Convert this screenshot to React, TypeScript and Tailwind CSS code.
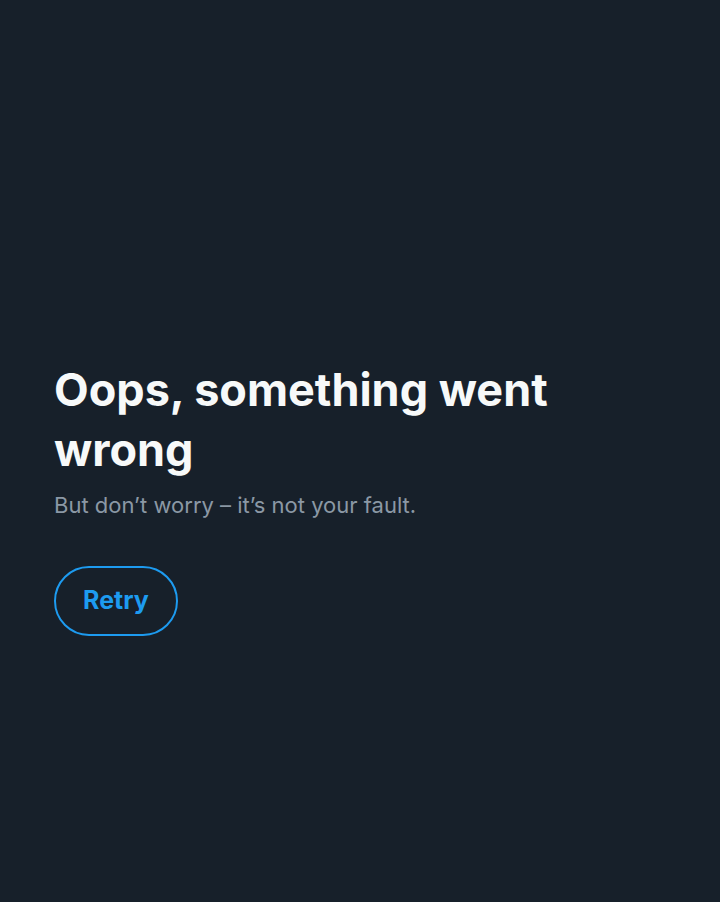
import React from 'react';

const App: React.FC = () => {
  return (
    <div
      className="min-h-screen w-full bg-[#17202a] px-[54px] pt-[360px]"
      style={{ fontFamily: 'Inter, "Liberation Sans", sans-serif' }}
    >
      <h1 className="text-[45px] leading-[60px] font-bold text-[#f7f9f9]">
        Oops, something went wrong
      </h1>
      <p className="mt-[10px] text-[22px] leading-[30px] text-[#8b98a5]">
        But don’t worry – it’s not your fault.
      </p>
      <button className="mt-[46px] h-[70px] w-[124px] rounded-full border-2 border-[#1d9bf0] text-[25px] font-bold text-[#1d9bf0]">
        Retry
      </button>
    </div>
  );
};

export default App;
